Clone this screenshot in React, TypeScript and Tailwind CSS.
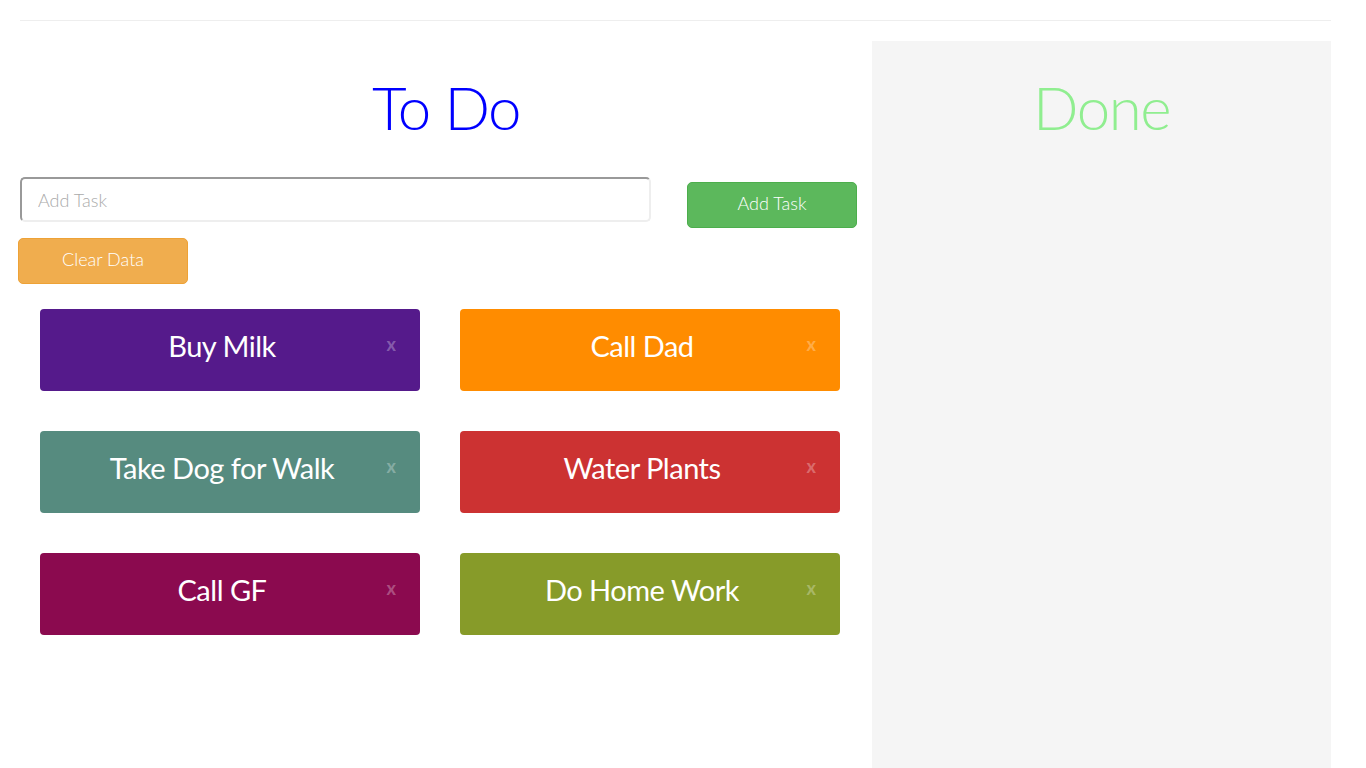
import React from "react";

const tasks = [
  { name: "Buy Milk", bg: "bg-[#551a8b]" },
  { name: "Call Dad", bg: "bg-[#ff8c00]" },
  { name: "Take Dog for Walk", bg: "bg-[#568b7f]" },
  { name: "Water Plants", bg: "bg-[#cc3232]" },
  { name: "Call GF", bg: "bg-[#8b0a4f]" },
  { name: "Do Home Work", bg: "bg-[#879b29]" },
];

export default function App() {
  return (
    <div
      className="h-screen overflow-y-scroll bg-white"
      style={{ fontFamily: "Lato, 'Noto Sans', sans-serif" }}
    >
      <div className="ml-[20px] w-[1311px] pt-[20px]">
        <div className="border-t border-[#eeeeee]" />
        <div className="flex mt-[20px]">
          <div className="w-[852px] shrink-0">
            <h1 className="text-center text-[60px] font-light leading-none text-[#0000ff] mt-[36px] h-[80px] tracking-[-1.5px]">
              To Do
            </h1>
            <div className="flex items-start mt-[20px]">
              <input
                placeholder="Add Task"
                className="w-[631px] h-[45px] rounded-[5px] border-2 border-t-[#999] border-l-[#999] border-b-[#eee] border-r-[#eee] px-[16px] text-[18px] font-light placeholder:text-[#aaaaaa] outline-none"
              />
              <button className="ml-[36px] mt-[5px] w-[170px] h-[46px] rounded-[5px] bg-[#5cb85c] border border-[#4cae4c] text-white text-[18px] font-light pb-[4px]">
                Add Task
              </button>
            </div>
            <button className="-ml-[2px] mt-[10px] w-[170px] h-[46px] rounded-[5px] bg-[#f0ad4e] border border-[#eea236] text-white text-[18px] font-light pb-[4px]">
              Clear Data
            </button>
            <div className="grid grid-cols-[380px_380px] gap-x-[40px] gap-y-[40px] px-[20px] mt-[25px]">
              {tasks.map((t) => (
                <div
                  key={t.name}
                  className={`relative h-[82px] rounded-[4px] ${t.bg} flex items-center justify-center pr-[16px] pb-[8px]`}
                >
                  <span className="text-white text-[29px] tracking-[-0.5px]">{t.name}</span>
                  <span className="absolute right-[24px] top-[26px] text-[18px] font-bold leading-none text-white/30">
                    x
                  </span>
                </div>
              ))}
            </div>
          </div>
          <div className="w-[459px] h-[1017px] bg-[#f5f5f5]">
            <h1 className="text-center text-[60px] font-light leading-none text-[#90ee90] mt-[36px] tracking-[-1.5px]">
              Done
            </h1>
          </div>
        </div>
      </div>
    </div>
  );
}
